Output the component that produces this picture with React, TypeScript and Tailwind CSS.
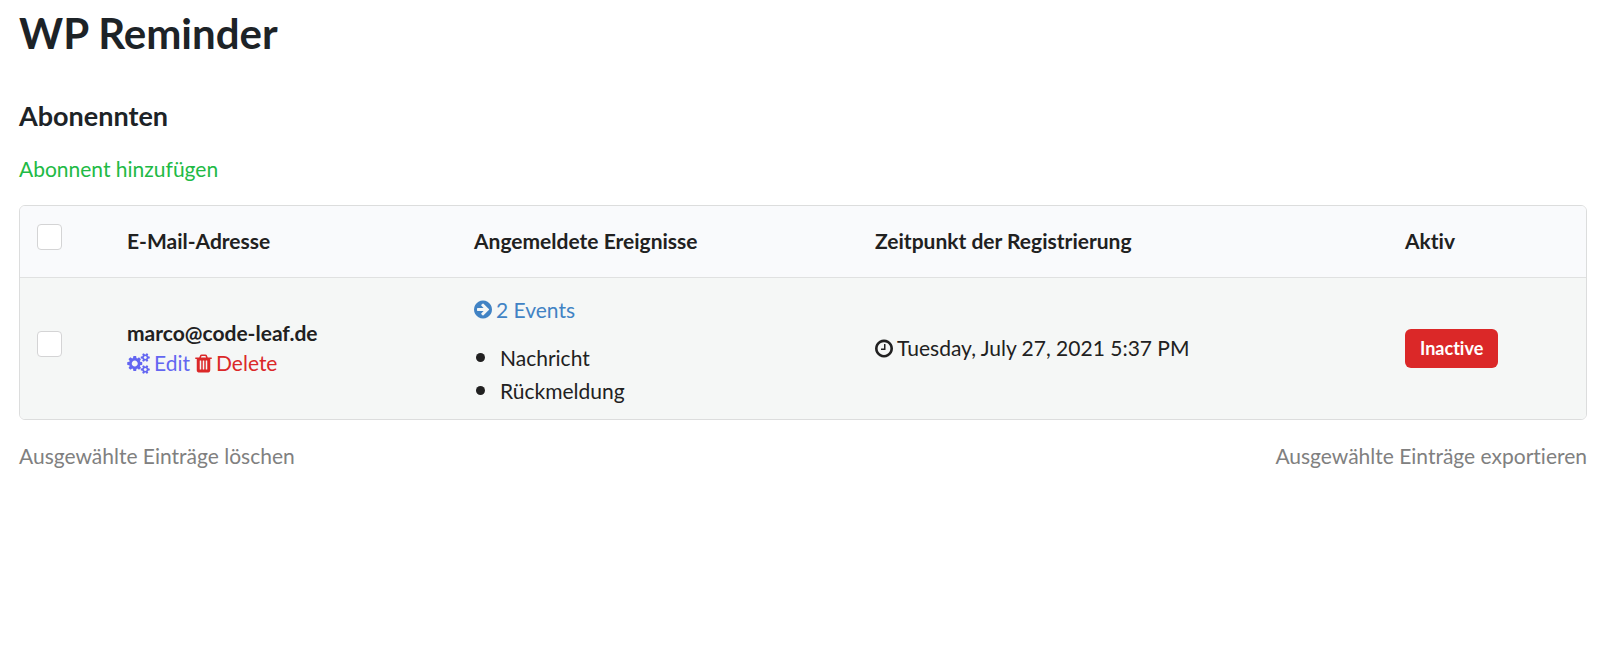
import React, { type ReactNode } from "react";

function Glyph({ className, viewBox, d }: { className: string; viewBox: string; d: string }) {
  return (
    <svg viewBox={viewBox} className={`shrink-0 ${className}`} fill="currentColor" aria-hidden="true">
      <path d={d} />
    </svg>
  );
}

const ring =
  "M1536 896q0 209-103 385.500t-279.500 279.500-385.500 103-385.500-103-279.500-279.500-103-385.500 103-385.500 279.500-279.500 385.500-103 385.500 103 279.500 279.500 103 385.500z";

const smallCog =
  "v140q0 16-149 31-12 27-30 52 51 113 51 138 0 4-4 7-122 71-124 71-8 0-46-47t-52-68q-20 2-30 2t-30-2q-14 21-52 68t-46 47q-2 0-124-71-4-3-4-7 0-25 51-138-18-25-30-52-149-15-149-31v-140q0-16 149-31 13-29 30-52-51-113-51-138 0-4 4-7 4-2 35-20t59-34 30-16q8 0 46 46.500t52 67.500q20-2 30-2t30 2q51-71 92-112l6-2q4 0 124 70 4 3 4 7 0 25-51 138 17 23 30 52 149 15 149 31z";

const cogsPath =
  "M832 896q0-106-75-181t-181-75-181 75-75 181 75 181 181 75 181-75 75-181zm768 512q0-52-38-90t-90-38-90 38-38 90q0 53 37.500 90.500t90.500 37.500 90.500-37.500 37.500-90.500zm0-1024q0-52-38-90t-90-38-90 38-38 90q0 53 37.500 90.500t90.500 37.500 90.500-37.500 37.500-90.500zm-384 421v185q0 10-7 19.500t-16 10.500l-155 24q-11 35-32 76 34 48 90 115 7 11 7 20 0 12-7 19-23 30-82.500 89.500t-78.500 59.500q-11 0-21-7l-115-90q-37 19-77 31-11 108-23 155-7 24-30 24h-186q-11 0-20-7.500t-10-17.500l-23-153q-34-10-75-31l-118 89q-7 7-20 7-11 0-21-8-144-133-144-160 0-9 7-19 10-14 41-53t47-61q-23-44-35-82l-152-24q-10-1-17-9.500t-7-19.500v-185q0-10 7-19.500t16-10.500l155-24q11-35 32-76-34-48-90-115-7-11-7-20 0-12 7-20 22-30 82-89t79-59q11 0 21 7l115 90q34-18 77-32 11-108 23-154 7-24 30-24h186q11 0 20 7.500t10 17.500l23 153q34 10 75 31l118-89q8-7 20-7 11 0 21 8 144 133 144 160 0 8-7 19-12 16-42 54t-45 60q23 48 34 82l152 23q10 2 17 10.500t7 19.500zm640 533" +
  smallCog +
  "m0-1024" +
  smallCog;

const trashPath =
  "M512 1376v-704q0-14-9-23t-23-9h-64q-14 0-23 9t-9 23v704q0 14 9 23t23 9h64q14 0 23-9t9-23zm256 0v-704q0-14-9-23t-23-9h-64q-14 0-23 9t-9 23v704q0 14 9 23t23 9h64q14 0 23-9t9-23zm256 0v-704q0-14-9-23t-23-9h-64q-14 0-23 9t-9 23v704q0 14 9 23t23 9h64q14 0 23-9t9-23zm-544-992h448l-48-117q-7-9-17-11h-317q-10 2-17 11zm928 32v64q0 14-9 23t-23 9h-96v948q0 83-47 143.500t-113 60.500h-832q-66 0-113-58.500t-47-141.500v-952h-96q-14 0-23-9t-9-23v-64q0-14 9-23t23-9h309l70-167q15-37 54-63t79-26h320q40 0 79 26t54 63l70 167h309q14 0 23 9t9 23z";

const arrowPath =
  "M1285 896q0-27-18-45l-91-91-362-362q-18-18-45-18t-45 18l-91 91q-18 18-18 45t18 45l189 189h-502q-26 0-45 19t-19 45v128q0 26 19 45t45 19h502l-189 189q-19 19-19 45t19 45l91 91q18 18 45 18t45-18l362-362 91-91q18-18 18-45z" +
  ring;

const clockPath =
  "M896 544v448q0 14-9 23t-23 9h-320q-14 0-23-9t-9-23v-64q0-14 9-23t23-9h224v-352q0-14 9-23t23-9h64q14 0 23 9t9 23zm416 352q0-148-73-273t-198-198-273-73-273 73-198 198-73 273 73 273 198 198 273 73 273-73 198-198 73-273z" +
  ring;

function Checkbox({ label }: { label: string }) {
  return (
    <input
      type="checkbox"
      aria-label={label}
      className="mb-2 block h-[26px] w-[25px] appearance-none rounded-[4px] border border-[#d4d4d5] bg-white checked:bg-[#4183c4]"
    />
  );
}

function HeaderCell({ children }: { children: ReactNode }) {
  return <th scope="col" className="px-[17px] font-bold">{children}</th>;
}

const events = ["Nachricht", "Rückmeldung"];

export default function App() {
  return (
    <main className="pt-[6px] pr-[23px] pl-[19px] font-['Lato',sans-serif] text-[21px] leading-[30px] text-[#212121] [font-variant-ligatures:none]">
      <h1 className="text-[42px] leading-[54px] font-bold text-[#1d2327]">WP Reminder</h1>
      <h2 className="mt-[39px] text-[27px] leading-[34px] font-bold text-[#1d2327]">Abonennten</h2>
      <a href="#add" className="mt-[21px] block w-fit text-[#21ba45]">Abonnent hinzufügen</a>

      <div className="mt-[21px] overflow-hidden rounded-[6px] border border-[#dcdddd]">
        <table className="w-full table-fixed border-collapse text-left">
          <colgroup>
            <col className="w-[90px]" />
            <col className="w-[22.16%]" />
            <col className="w-[25.61%]" />
            <col className="w-[33.84%]" />
            <col />
          </colgroup>
          <thead>
            <tr className="h-[71px] border-b border-[#e0e1e1] bg-[#f9fafc]">
              <th scope="col" className="px-[17px]">
                <Checkbox label="Alle auswählen" />
              </th>
              <HeaderCell>E-Mail-Adresse</HeaderCell>
              <HeaderCell>Angemeldete Ereignisse</HeaderCell>
              <HeaderCell>Zeitpunkt der Registrierung</HeaderCell>
              <HeaderCell>Aktiv</HeaderCell>
            </tr>
          </thead>
          <tbody>
            <tr className="bg-[#f5f7f6]">
              <td className="px-[17px]">
                <Checkbox label="marco@code-leaf.de auswählen" />
              </td>
              <td className="px-[17px]">
                <div className="font-bold">marco@code-leaf.de</div>
                <div className="flex gap-[5px]">
                  <a href="#edit" className="flex items-center gap-1 text-[#6366f1]">
                    <Glyph className="h-[21px] w-[23px]" viewBox="-64 0 1920 1792" d={cogsPath} />
                    Edit
                  </a>
                  <a href="#delete" className="flex items-center gap-1 text-[#db2828]">
                    <Glyph className="h-[21px] w-[17px]" viewBox="0 0 1408 1792" d={trashPath} />
                    Delete
                  </a>
                </div>
              </td>
              <td className="px-[17px] pt-[17px] pb-3">
                <a href="#events" className="flex w-fit items-center gap-1 text-[#4183c4]">
                  <Glyph className="h-[21px] w-[18px]" viewBox="0 0 1536 1792" d={arrowPath} />
                  2 Events
                </a>
                <ul className="mt-4 leading-[33px]">
                  {events.map((name) => (
                    <li key={name} className="flex items-center gap-[15px] pl-[2px]">
                      <span className="size-[9px] rounded-full bg-[#212121]" />
                      {name}
                    </li>
                  ))}
                </ul>
              </td>
              <td className="px-[17px]">
                <div className="flex items-center gap-1">
                  <Glyph className="h-[21px] w-[18px]" viewBox="0 0 1536 1792" d={clockPath} />
                  Tuesday, July 27, 2021 5:37 PM
                </div>
              </td>
              <td className="px-[17px]">
                <span className="block w-fit rounded-[6px] bg-[#db2828] px-[15px] text-[18px] leading-[39px] font-bold text-white">
                  Inactive
                </span>
              </td>
            </tr>
          </tbody>
        </table>
      </div>

      <div className="mt-[21px] flex justify-between text-[#808080]">
        <a href="#delete-selected">Ausgewählte Einträge löschen</a>
        <a href="#export-selected">Ausgewählte Einträge exportieren</a>
      </div>
    </main>
  );
}
